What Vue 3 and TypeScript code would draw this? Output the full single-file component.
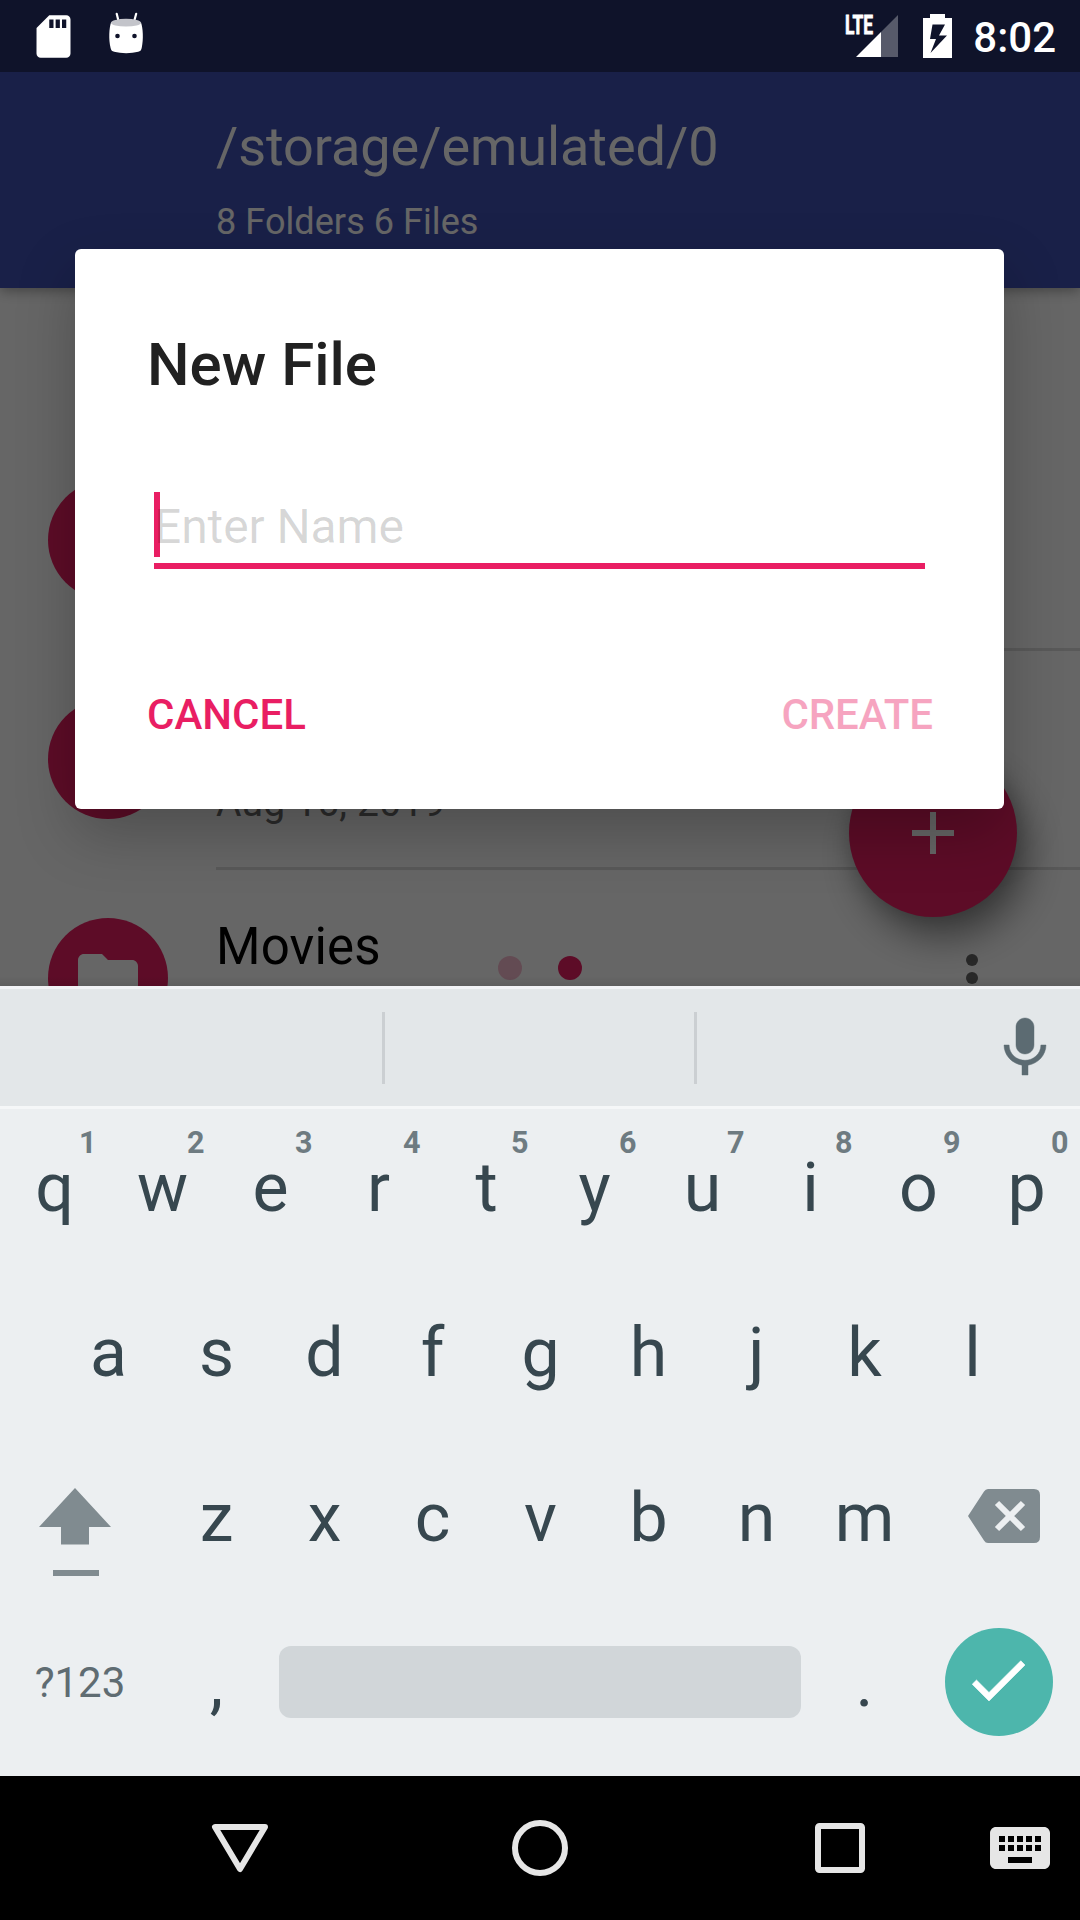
<script setup lang="ts">
interface Key {
  label: string
  hint?: string
}

const topRow: Key[] = [...'qwertyuiop'].map((label, i) => ({ label, hint: String((i + 1) % 10) }))
const homeRow: Key[] = [...'asdfghjkl'].map((label) => ({ label }))
const bottomRow: Key[] = [...'zxcvbnm'].map((label) => ({ label }))

interface Entry {
  name: string
  date: string
}

const entries: Entry[] = [
  { name: '', date: '' },
  { name: '', date: 'Aug 16, 2019' },
  { name: 'Movies', date: '' },
]
</script>

<template>
  <div class="phone">
    <header class="status">
      <div class="status-left">
        <svg class="sd" viewBox="0 0 24 24">
          <path d="M18 2h-8L4.02 8 4 20c0 1.1.9 2 2 2h12c1.1 0 2-.9 2-2V4c0-1.1-.9-2-2-2zm-6 6h-2V4h2v4zm3 0h-2V4h2v4zm3 0h-2V4h2v4z" />
        </svg>
        <svg class="droid" viewBox="0 0 40 48">
          <path d="M10.7 3.8l2 8M30.2 3.8l-2.2 8" stroke="#fff" stroke-width="2.2" stroke-linecap="round" fill="none" />
          <path d="M5 12.5C3.2 18 2.4 29 4.6 38c.5 2.600 1.600 3.200 3.600 3.800 7 1.900 17 1.900 24 0 2-.6 3-1.200 3.500-3.800C37.700 29 36.900 18 35 12.500z" />
          <ellipse cx="20" cy="12.700" rx="15" ry="3.900" fill="#c3c4ca" />
          <circle cx="11.500" cy="26" r="2.300" fill="#0f132a" />
          <circle cx="28.500" cy="26" r="2.300" fill="#0f132a" />
        </svg>
      </div>
      <div class="status-right">
        <svg class="signal" viewBox="0 0 56 48">
          <text x="2" y="24" textLength="28" lengthAdjust="spacingAndGlyphs">LTE</text>
          <path d="M55 5v42H38V22z" opacity=".3" />
          <path d="M38 22v25H13z" />
        </svg>
        <svg class="battery" viewBox="0 0 29 44">
          <path fill-rule="evenodd" d="M7 0h15v4h7v40H0V4h7zM9.500 10.500L7 25h6L7.500 39 24 21.500h-8l6-11z" />
        </svg>
        <span class="time">8:02</span>
      </div>
    </header>

    <main class="app">
      <div class="toolbar">
        <div class="path">/storage/emulated/0</div>
        <div class="count">8 Folders 6 Files</div>
      </div>

      <div class="list">
        <div v-for="(entry, i) in entries" :key="i" class="row">
          <div class="avatar">
            <svg v-if="entry.name" viewBox="0 0 24 24">
              <path d="M10 4H4c-1.1 0-1.99.9-1.99 2L2 18c0 1.1.9 2 2 2h16c1.1 0 2-.9 2-2V8c0-1.1-.9-2-2-2h-8l-2-2z" />
            </svg>
          </div>
          <div class="info">
            <div class="name">{{ entry.name }}</div>
            <div class="date">{{ entry.date }}</div>
            <svg v-if="entry.name" class="more" viewBox="0 0 24 24">
              <circle cx="12" cy="6" r="2" />
              <circle cx="12" cy="12" r="2" />
              <circle cx="12" cy="18" r="2" />
            </svg>
          </div>
        </div>
      </div>

      <div class="pager"><i class="faded"></i><i></i></div>
      <div class="fab">
        <svg viewBox="0 0 24 24"><path d="M19 13h-6v6h-2v-6H5v-2h6V5h2v6h6z" /></svg>
      </div>

      <div class="scrim"></div>

      <section class="dialog">
        <h1>New File</h1>
        <div class="field"><span class="caret"></span><span class="placeholder">Enter Name</span></div>
        <div class="actions"><span>CANCEL</span><span class="disabled">CREATE</span></div>
      </section>
    </main>

    <section class="keyboard">
      <div class="suggestions">
        <i></i><i></i>
        <svg class="mic" viewBox="0 0 24 24">
          <path d="M12 14c1.66 0 2.99-1.34 2.99-3L15 5c0-1.66-1.34-3-3-3S9 3.34 9 5v6c0 1.66 1.34 3 3 3zm5.3-3c0 3-2.54 5.1-5.3 5.1S6.700 14 6.700 11H5c0 3.41 2.72 6.23 6 6.72V21h2v-3.280c3.280-.48 6-3.300 6-6.720h-1.700z" />
        </svg>
      </div>
      <div class="keys">
        <span v-for="key in topRow" :key="key.label" class="key">{{ key.label }}<sup>{{ key.hint }}</sup></span>
      </div>
      <div class="keys">
        <span v-for="key in homeRow" :key="key.label" class="key">{{ key.label }}</span>
      </div>
      <div class="keys">
        <div class="wide shift">
          <svg viewBox="0 0 72 88">
            <path d="M36 0l36 39H50v17.500H22V39H0zM14 82h46v6H14z" />
          </svg>
        </div>
        <span v-for="key in bottomRow" :key="key.label" class="key">{{ key.label }}</span>
        <div class="wide backspace">
          <svg viewBox="0 0 72 54">
            <path d="M20 0h46q6 0 6 6v42q0 6-6 6H20q-2.500 0-4-2.500L0 27 16 2.500Q17.500 0 20 0z" />
            <path d="M29 14l26 26M55 14L29 40" stroke="#eceff1" stroke-width="6" />
          </svg>
        </div>
      </div>
      <div class="keys">
        <div class="wide symbols">?123</div>
        <span class="key">,</span>
        <div class="space"></div>
        <span class="key">.</span>
        <div class="wide">
          <div class="enter">
            <svg viewBox="0 0 24 24"><path d="M9 16.17L4.83 12l-1.42 1.41L9 19 21 7l-1.410-1.410z" /></svg>
          </div>
        </div>
      </div>
    </section>

    <nav class="nav">
      <svg class="back" viewBox="0 0 72 72"><path d="M11 15h50L36 57z" /></svg>
      <svg class="home" viewBox="0 0 72 72"><circle cx="36" cy="36" r="25" /></svg>
      <svg class="recent" viewBox="0 0 72 72"><rect x="14" y="14" width="44" height="44" rx="1.500" /></svg>
      <svg class="ime" viewBox="0 0 24 24">
        <path d="M20 5H4c-1.1 0-1.99.9-1.99 2L2 17c0 1.1.9 2 2 2h16c1.1 0 2-.9 2-2V7c0-1.1-.9-2-2-2zm-9 3h2v2h-2V8zm0 3h2v2h-2v-2zM8 8h2v2H8V8zm0 3h2v2H8v-2zm-1 2H5v-2h2v2zm0-3H5V8h2v2zm9 7H8v-2h8v2zm0-4h-2v-2h2v2zm0-3h-2V8h2v2zm3 3h-2v-2h2v2zm0-3h-2V8h2v2z" />
      </svg>
    </nav>
  </div>
</template>

<style scoped>
* { box-sizing: border-box; }
svg { display: block; flex: none; }
.phone {
  width: 1080px;
  height: 1920px;
  display: flex;
  flex-direction: column;
  overflow: hidden;
  font-family: Roboto, "Noto Sans", sans-serif;
  background: #000;
}

.status {
  height: 72px;
  flex: none;
  display: flex;
  justify-content: space-between;
  background: #0f132a;
  color: #fff;
  fill: #fff;
}
.status-left, .status-right { display: flex; align-items: flex-start; }
.status-left { padding-left: 28px; }
.sd { width: 51px; height: 51px; margin-top: 10.5px; }
.droid { width: 40px; height: 48px; margin: 10px 0 0 27px; }
.status-right { padding-right: 24px; }
.signal { width: 56px; height: 48px; margin: 10px 24px 0 0; }
.signal text { font-size: 25.5px; font-weight: 700; stroke: #fff; stroke-width: .8px; }
.battery { width: 29px; height: 44px; margin: 14px 21px 0 0; }
.time { font-size: 42px; font-weight: 500; line-height: 50px; margin-top: 13px; }

.app {
  height: 914px;
  flex: none;
  position: relative;
  overflow: hidden;
  background: #fff;
}
.toolbar {
  position: relative;
  height: 216px;
  padding: 43px 0 0 216px;
  background: #3f51b5;
  color: #fff;
  box-shadow: 0 3px 12px rgba(0, 0, 0, .35);
}
.path { font-size: 54px; line-height: 64px; letter-spacing: -.06px; }
.count { font-size: 36px; line-height: 42px; margin-top: 22px; letter-spacing: .07px; }

.list { padding-top: 144px; }
.row { height: 219px; display: flex; padding-left: 48px; }
.avatar {
  width: 120px;
  height: 120px;
  margin: 48px 48px 0 0;
  border-radius: 50%;
  background: #e91e63;
  display: flex;
  align-items: center;
  justify-content: center;
  fill: #fff;
}
.avatar svg { width: 72px; height: 72px; }
.info {
  flex: 1;
  position: relative;
  padding-top: 47px;
  border-bottom: 3px solid #dedede;
}
.name { height: 60px; font-size: 51px; line-height: 60px; letter-spacing: .15px; color: #000; }
.date { height: 46px; margin-top: 22px; font-size: 39px; line-height: 46px; letter-spacing: .2px; color: #6b6b6b; }
.more { position: absolute; right: 72px; top: 72px; width: 72px; height: 72px; fill: #666; }

.pager { position: absolute; left: 498px; top: 884px; display: flex; gap: 36px; }
.pager i { width: 24px; height: 24px; border-radius: 50%; background: #e91e63; }
.pager .faded { opacity: .3; }
.fab {
  position: absolute;
  left: 849px;
  top: 677px;
  width: 168px;
  height: 168px;
  border-radius: 50%;
  background: #e91e63;
  box-shadow: 10px 20px 38px rgba(0, 0, 0, .45), 0 0 20px rgba(0, 0, 0, .12);
  display: flex;
  align-items: center;
  justify-content: center;
  fill: #fff;
}
.fab svg { width: 72px; height: 72px; }
.scrim {
  position: absolute;
  inset: 0;
  background: linear-gradient(transparent 904px, rgba(0, 0, 0, .08)), rgba(0, 0, 0, .6);
}

.dialog {
  position: absolute;
  left: 75px;
  top: 177px;
  width: 929px;
  height: 560px;
  padding: 81px 71px 0 72px;
  border-radius: 6px;
  background: #fff;
  box-shadow: 0 24px 60px rgba(0, 0, 0, .24);
}
h1 { margin: 0; font-size: 60px; font-weight: 500; line-height: 70px; color: #212121; }
.field {
  position: relative;
  height: 77px;
  margin: 92px 8px 0 7px;
  padding-top: 7px;
  border-bottom: 6px solid #e91e63;
  font-size: 48px;
  line-height: 56px;
}
.caret { position: absolute; left: 0; top: 0; width: 6px; height: 65px; background: #e91e63; }
.placeholder { position: relative; letter-spacing: -.12px; color: rgba(0, 0, 0, .16); }
.actions {
  display: flex;
  justify-content: space-between;
  margin-top: 121px;
  font-size: 42px;
  font-weight: 500;
  line-height: 50px;
  color: #e91e63;
}
.disabled { opacity: .4; letter-spacing: -.1px; }

.keyboard { height: 790px; flex: none; background: #eceff1; color: #37474f; }
.suggestions {
  height: 123px;
  display: flex;
  padding: 23px 19px 0 382px;
  background: #e3e7e9;
  border-top: 3px solid #f2f3f6;
  border-bottom: 3px solid #f5f7f8;
}
.suggestions i { width: 3px; height: 72px; margin-right: 309px; background: #cbcfd2; }
.suggestions i + i { margin-right: 0; }
.mic { width: 72px; height: 72px; margin-left: auto; fill: #5c6b72; stroke: #5c6b72; stroke-width: .15; }
.keys { height: 165px; display: flex; justify-content: center; align-items: flex-start; }
.key {
  position: relative;
  width: 108px;
  flex: none;
  padding-left: 1px;
  text-align: center;
  font-size: 68px;
  line-height: 159px;
}
.key sup {
  position: absolute;
  right: 11.5px;
  top: 18.500px;
  font-size: 30.5px;
  font-weight: 700;
  line-height: 30px;
  color: #6e7b81;
}
.wide { width: 162px; flex: none; fill: #808b90; }
.shift svg { width: 72px; height: 88px; margin: 49px 0 0 39px; }
.backspace svg { width: 72px; height: 54px; margin: 50px 0 0 50px; }
.symbols { margin-top: 54px; padding-right: 2px; text-align: center; font-size: 42px; line-height: 50px; color: #5f6c72; }
.space { width: 522px; height: 72px; margin: 42px 9px 0; border-radius: 12px; background: #d1d6d9; }
.enter {
  width: 108px;
  height: 108px;
  margin: 24px auto 0;
  padding: 16px 0 0 17px;
  border-radius: 50%;
  background: #4db6ac;
  fill: #fff;
}
.enter svg { width: 72px; height: 72px; stroke: #fff; stroke-width: .2; }

.nav { height: 144px; flex: none; display: flex; align-items: center; background: #000; }
.nav svg { width: 72px; height: 72px; fill: none; stroke: #e6e6e6; stroke-width: 6; stroke-linejoin: round; }
.nav .back { margin-left: 204px; }
.nav .home, .nav .recent { margin-left: 228px; }
.nav .ime { margin-left: 108px; fill: #e6e6e6; stroke: none; }
</style>
